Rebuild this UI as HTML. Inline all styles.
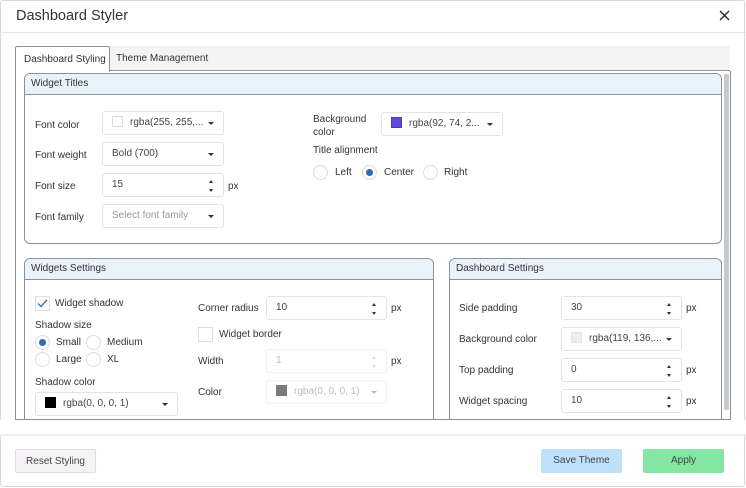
<!DOCTYPE html>
<html><head><meta charset="utf-8"><style>
*{box-sizing:border-box;margin:0;padding:0}
body{width:746px;height:488px;background:#fff;font-family:"Liberation Sans",sans-serif;font-size:10px;color:#333;position:relative;overflow:hidden}
.a{position:absolute}
.lbl{position:absolute;font-size:10px;color:#333;white-space:nowrap}
.inp{position:absolute;border:1px solid #e3e3e3;border-radius:3px;background:#fff;height:24px;font-size:10px;color:#444;padding-left:9px;line-height:22px;white-space:nowrap}
.dd::after{content:"";position:absolute;right:9px;top:10px;border-left:3px solid transparent;border-right:3px solid transparent;border-top:3px solid #333}
.spin::before{content:"";position:absolute;right:10px;top:6px;border-left:2.5px solid transparent;border-right:2.5px solid transparent;border-bottom:3px solid #333}
.spin::after{content:"";position:absolute;right:10px;top:15px;border-left:2.5px solid transparent;border-right:2.5px solid transparent;border-top:3px solid #333}
.dis{color:#bbb}
.dis.spin::before{border-bottom-color:#ddd}.dis.spin::after{border-top-color:#ddd}.dis.dd::after{border-top-color:#bbb}
.sw{display:inline-block;width:11px;height:11px;vertical-align:-2px;margin-right:7px}
.fs{position:absolute;border:1px solid #8a9199;border-radius:6px;background:#fff;overflow:hidden}
.fh{height:21px;background:#e9f3fc;border-bottom:1px solid #8a9199;padding-left:6px;line-height:20px;font-size:10px;color:#333}
.rad{position:absolute;width:15px;height:15px;border:1px solid #ddd;border-radius:50%;background:#fff}
.rad.on::after{content:"";position:absolute;left:3px;top:3px;width:7px;height:7px;border-radius:50%;background:#2e6db4}
.cb{position:absolute;width:15px;height:15px;border:1px solid #ddd;background:#fff}
.btn{position:absolute;height:24px;border-radius:2px;font-size:10px;text-align:center;line-height:24px;color:#444}
</style></head><body>
<div class="a" style="left:0;top:0;width:745px;height:487px;border:1px solid #d8d8d8;border-radius:3px"></div>
<div class="a" style="left:16px;top:8px;font-size:14.5px;color:#333">Dashboard Styler</div>
<svg class="a" style="left:719px;top:10px" width="11" height="11"><path d="M1 1L10 10M10 1L1 10" stroke="#222" stroke-width="1.3"/></svg>
<div class="a" style="left:0;top:32px;width:746px;height:1px;background:#e5e5e5"></div>

<!-- tabs -->
<div class="a" style="left:15px;top:46px;width:715px;height:25px;background:#f4f4f4;border-bottom:1px solid #8a9199"></div>
<div class="a" style="left:15px;top:46px;width:95px;height:26px;background:#fff;border:1px solid #8a9199;border-bottom:none;border-radius:2px 2px 0 0;font-size:10px;line-height:26px;padding-left:8px;color:#333">Dashboard Styling</div>
<div class="a" style="left:116px;top:46px;font-size:10px;line-height:26px;color:#333">Theme Management</div>
<div class="a" style="left:15px;top:71px;width:716px;height:349px;border:1px solid #8a9199;border-top:none"></div>
<div class="a" style="left:724px;top:74px;width:5px;height:336px;background:#c6c9cc;border-radius:1px"></div>

<!-- Widget Titles -->
<div class="fs" style="left:24px;top:73px;width:698px;height:171px"><div class="fh">Widget Titles</div></div>
<div class="lbl" style="left:35px;top:120px">Font color</div>
<div class="inp dd" style="left:102px;top:111px;width:122px"><span class="sw" style="border:1px solid #ddd;background:#fff"></span>rgba(255, 255,...</div>
<div class="lbl" style="left:35px;top:150px">Font weight</div>
<div class="inp dd" style="left:102px;top:142px;width:122px">Bold (700)</div>
<div class="lbl" style="left:35px;top:181px">Font size</div>
<div class="inp spin" style="left:102px;top:173px;width:122px">15</div>
<div class="lbl" style="left:228px;top:181px">px</div>
<div class="lbl" style="left:35px;top:212px">Font family</div>
<div class="inp dd" style="left:102px;top:204px;width:122px;color:#999">Select font family</div>
<div class="lbl" style="left:313px;top:113px;line-height:13px">Background<br>color</div>
<div class="inp dd" style="left:381px;top:112px;width:122px"><span class="sw" style="background:#5c4ae0;border:1px solid #4a3bb8"></span>rgba(92, 74, 2...</div>
<div class="lbl" style="left:313px;top:145px">Title alignment</div>
<div class="rad" style="left:313px;top:165px"></div><div class="lbl" style="left:335px;top:167px">Left</div>
<div class="rad on" style="left:362px;top:165px"></div><div class="lbl" style="left:384px;top:167px">Center</div>
<div class="rad" style="left:423px;top:165px"></div><div class="lbl" style="left:444px;top:167px">Right</div>

<!-- Widgets Settings -->
<div class="fs" style="left:24px;top:258px;width:410px;height:170px"><div class="fh">Widgets Settings</div></div>
<div class="cb" style="left:35px;top:296px"></div>
<svg class="a" style="left:37px;top:299px" width="11" height="9"><path d="M1 4.5L4 7.5L10 1" stroke="#2e6db4" stroke-width="1.3" fill="none"/></svg>
<div class="lbl" style="left:55px;top:298px">Widget shadow</div>
<div class="lbl" style="left:35px;top:320px">Shadow size</div>
<div class="rad on" style="left:35px;top:335px"></div><div class="lbl" style="left:56px;top:337px">Small</div>
<div class="rad" style="left:86px;top:335px"></div><div class="lbl" style="left:107px;top:337px">Medium</div>
<div class="rad" style="left:35px;top:352px"></div><div class="lbl" style="left:56px;top:354px">Large</div>
<div class="rad" style="left:86px;top:352px"></div><div class="lbl" style="left:107px;top:354px">XL</div>
<div class="lbl" style="left:35px;top:377px">Shadow color</div>
<div class="inp dd" style="left:35px;top:392px;width:143px"><span class="sw" style="background:#000"></span>rgba(0, 0, 0, 1)</div>
<div class="lbl" style="left:198px;top:303px">Corner radius</div>
<div class="inp spin" style="left:266px;top:296px;width:121px">10</div>
<div class="lbl" style="left:391px;top:303px">px</div>
<div class="cb" style="left:198px;top:327px"></div>
<div class="lbl" style="left:219px;top:329px">Widget border</div>
<div class="lbl" style="left:198px;top:356px">Width</div>
<div class="inp spin dis" style="left:266px;top:349px;width:121px;border-color:#f0f0f0">1</div>
<div class="lbl" style="left:391px;top:356px">px</div>
<div class="lbl" style="left:198px;top:387px">Color</div>
<div class="inp dd dis" style="left:266px;top:380px;width:121px;border-color:#f0f0f0"><span class="sw" style="background:#7a7a7a"></span>rgba(0, 0, 0, 1)</div>

<!-- Dashboard Settings -->
<div class="fs" style="left:449px;top:258px;width:273px;height:170px"><div class="fh">Dashboard Settings</div></div>
<div class="lbl" style="left:459px;top:303px">Side padding</div>
<div class="inp spin" style="left:561px;top:296px;width:121px">30</div>
<div class="lbl" style="left:686px;top:303px">px</div>
<div class="lbl" style="left:459px;top:334px">Background color</div>
<div class="inp dd" style="left:561px;top:327px;width:121px"><span class="sw" style="background:#eee;border:1px solid #e4e4e4"></span>rgba(119, 136,...</div>
<div class="lbl" style="left:459px;top:365px">Top padding</div>
<div class="inp spin" style="left:561px;top:358px;width:121px">0</div>
<div class="lbl" style="left:686px;top:365px">px</div>
<div class="lbl" style="left:459px;top:396px">Widget spacing</div>
<div class="inp spin" style="left:561px;top:389px;width:121px">10</div>
<div class="lbl" style="left:686px;top:396px">px</div>

<div class="a" style="left:15px;top:419px;width:716px;height:1px;background:#8a9199"></div>
<div class="a" style="left:0;top:420px;width:746px;height:14px;background:#fff"></div>
<div class="a" style="left:0;top:434px;width:746px;height:2px;background:#eceef2"></div>

<div class="btn" style="left:15px;top:449px;width:81px;background:#f5f3f5;border:1px solid #e0dde0">Reset Styling</div>
<div class="btn" style="left:541px;top:449px;width:81px;background:#bfe0fa">Save Theme</div>
<div class="btn" style="left:643px;top:449px;width:81px;background:#84e6a2">Apply</div>
</body></html>
